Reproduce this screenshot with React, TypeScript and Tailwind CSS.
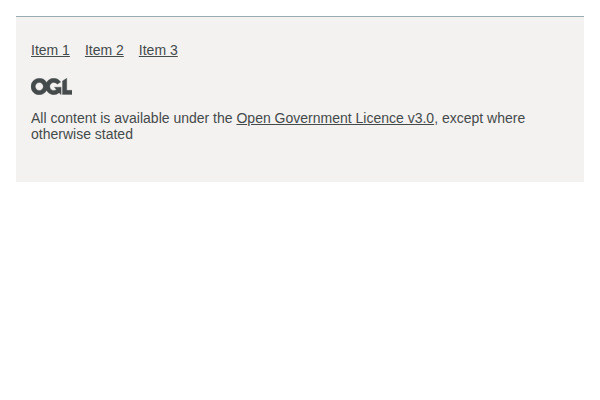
const items = ["Item 1", "Item 2", "Item 3"];

function OglLogo() {
  return (
    <svg
      aria-hidden="true"
      focusable="false"
      className="block h-[17px] w-[41px]"
      viewBox="0 0 483.2 195.7"
      height="17"
      width="41"
    >
      <path
        fill="currentColor"
        stroke="currentColor"
        strokeWidth="4"
        d="M421.5 142.8V.1l-50.7 32.3v161.1h112.4v-50.7zm-122.3-9.6A47.12 47.12 0 0 1 221 97.8c0-26 21.1-47.1 47.1-47.1 16.7 0 31.4 8.7 39.7 21.8l42.7-27.2A97.63 97.63 0 0 0 268.1 0c-36.5 0-68.3 20.1-85.1 49.7A98 98 0 0 0 97.8 0C43.9 0 0 43.9 0 97.8s43.9 97.8 97.8 97.8c36.5 0 68.3-20.1 85.1-49.7a97.76 97.76 0 0 0 149.6 25.4l19.4 22.2h3v-87.8h-80l24.3 27.5zM97.8 145c-26 0-47.1-21.1-47.1-47.1s21.1-47.1 47.1-47.1 47.2 21 47.2 47S123.8 145 97.8 145"
      />
    </svg>
  );
}

export default function App() {
  return (
    <div className="p-4 font-['Liberation_Sans',Arial,sans-serif]">
      <footer className="h-[166px] border-t border-[#9aabb2] bg-[#f3f2f1] px-[15px] pt-[25px] text-sm leading-4 text-[#454a4b]">
        <ul className="mb-5 flex gap-[15px]">
          {items.map((item) => (
            <li key={item}>
              <a href="#" className="underline">
                {item}
              </a>
            </li>
          ))}
        </ul>
        <OglLogo />
        <p className="mt-[15px]">
          All content is available under the{" "}
          <a href="#" className="underline">
            Open Government Licence v3.0
          </a>
          , except where otherwise stated
        </p>
      </footer>
    </div>
  );
}
